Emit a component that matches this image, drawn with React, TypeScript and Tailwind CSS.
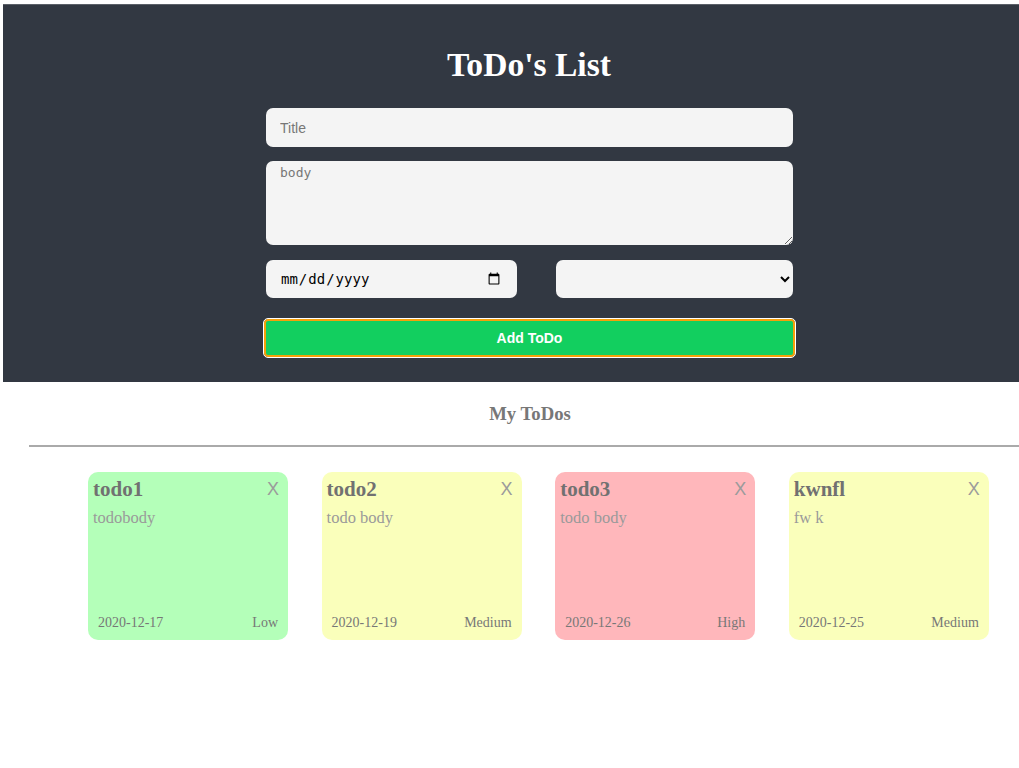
import React, { useState } from "react";

type Todo = {
  title: string;
  body: string;
  date: string;
  priority: "Low" | "Medium" | "High";
};

const todos: Todo[] = [
  { title: "todo1", body: "todobody", date: "2020-12-17", priority: "Low" },
  { title: "todo2", body: "todo body", date: "2020-12-19", priority: "Medium" },
  { title: "todo3", body: "todo body", date: "2020-12-26", priority: "High" },
  { title: "kwnfl", body: "fw k", date: "2020-12-25", priority: "Medium" },
];

const cardColor: Record<Todo["priority"], string> = {
  Low: "bg-[#b4ffb9]",
  Medium: "bg-[#faffbb]",
  High: "bg-[#ffb7bb]",
};

function TodoCard({ todo }: { todo: Todo }) {
  return (
    <div className={`${cardColor[todo.priority]} w-[200px] h-[168px] rounded-[10px] flex flex-col pt-[4px] pb-[9px] font-['Liberation_Serif',serif]`}>
      <div className="flex items-start justify-between pl-[5px] pr-[9px]">
        <h4 className="text-[21px] font-bold leading-[26px] text-[#717171]">{todo.title}</h4>
        <span className="text-[18px] leading-[24px] mt-[1px] text-[#9b9b9b] font-['Liberation_Sans',sans-serif]">X</span>
      </div>
      <p className="pl-[5px] mt-[6px] text-[16.5px] leading-[20px] text-[#9a9a9a]">{todo.body}</p>
      <div className="mt-auto flex justify-between px-[10px] text-[14px] leading-[16px] text-[#777]">
        <span>{todo.date}</span>
        <span>{todo.priority}</span>
      </div>
    </div>
  );
}

export default function App() {
  const [title, setTitle] = useState("");
  const [body, setBody] = useState("");

  return (
    <div className="min-h-[768px] bg-white">
      <div className="mt-[4px] ml-[3px] bg-[#323842] border-t border-[#5b6068] pb-[25px]">
        <h1 className="pt-[41px] text-center text-[33.6px] font-bold leading-[38px] text-white font-['Liberation_Serif',serif] pl-[36px]">
          ToDo's List
        </h1>
        <form className="w-[527px] ml-[263px] mt-[24px] flex flex-col" onSubmit={(e) => e.preventDefault()}>
          <input
            value={title}
            onChange={(e) => setTitle(e.target.value)}
            placeholder="Title"
            className="h-[39px] rounded-[7px] bg-[#f4f4f4] px-[14px] text-[14px] font-['Liberation_Sans',sans-serif] placeholder:text-[#777] outline-none"
          />
          <textarea
            value={body}
            onChange={(e) => setBody(e.target.value)}
            placeholder="body"
            className="mt-[14px] h-[84px] rounded-[7px] bg-[#f4f4f4] px-[14px] py-[2px] text-[13px] font-['DejaVu_Sans_Mono',monospace] placeholder:text-[#777] outline-none"
          />
          <div className="mt-[15px] flex justify-between">
            <input
              type="date"
              className="w-[251px] h-[38px] rounded-[7px] bg-[#f4f4f4] px-[14px] text-[14px] text-black font-['DejaVu_Sans_Mono',monospace] outline-none"
            />
            <select className="w-[237px] h-[38px] rounded-[7px] bg-[#f4f4f4] px-[4px] text-[14px] outline-none" defaultValue="">
              <option value=""></option>
              <option value="Low">Low</option>
              <option value="Medium">Medium</option>
              <option value="High">High</option>
            </select>
          </div>
          <button
            type="submit"
            className="mt-[21px] -ml-[2px] w-[531px] h-[38px] rounded-[4px] bg-[#12cf5f] border-2 border-[#f5a00a] outline outline-1 outline-white text-white text-[14px] font-bold font-['Liberation_Sans',sans-serif]"
          >
            Add ToDo
          </button>
        </form>
      </div>

      <h3 className="mt-[21px] text-center pl-[41px] text-[18.72px] font-bold leading-[22px] text-[#777] font-['Liberation_Serif',serif]">
        My ToDos
      </h3>
      <hr className="mt-[20px] ml-[29px] border-0 border-t-2 border-[#aaa]" />

      <div className="mt-[25px] pl-[88px] flex gap-[33.6px]">
        {todos.map((t) => (
          <TodoCard key={t.title} todo={t} />
        ))}
      </div>
    </div>
  );
}
